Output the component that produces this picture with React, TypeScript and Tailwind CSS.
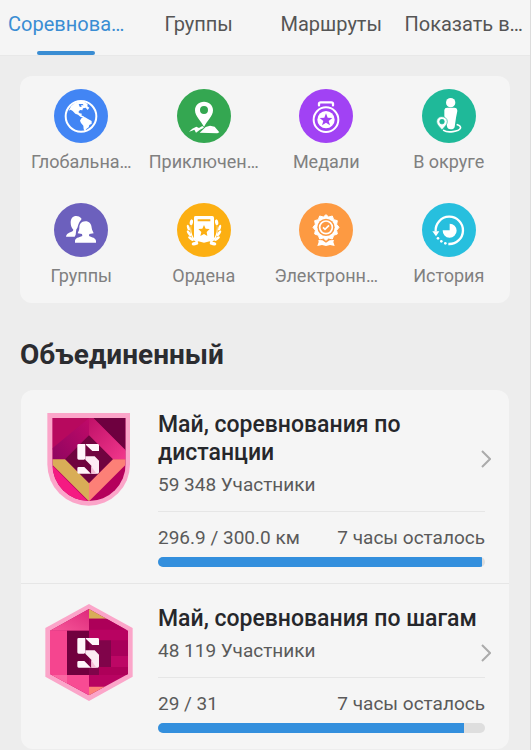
import type { ReactNode } from "react";

const tabs = ["Соревнова…", "Группы", "Маршруты", "Показать в…"];

function Globe() {
  return (
    <svg viewBox="102 39 162 162" className="size-full" aria-hidden="true">
      <circle cx="183" cy="121" r="46" fill="none" stroke="white" strokeWidth="6" />
      <path
        fill="white"
        d="M146 104 153 91 164 81 178 76 192 77 203 84 202 91 208 95 203 102 197 95 189 97 187 103 180 102 175 108 179 112 186 113 184 118 193 122 190 125 181 122 174 116 166 113 158 105 152 101ZM184 127 194 123 204 129 215 135 215 143 208 147 206 154 198 160 196 167 191 160 190 149 183 141 180 134ZM176 84 179 92 185 93 183 88 191 88 188 84Z"
      />
    </svg>
  );
}

function Adventure() {
  return (
    <svg viewBox="471 39 162 162" className="size-full" aria-hidden="true">
      <path
        fill="white"
        fillRule="evenodd"
        d="M552 77C536 77 525 88 525 103C525 121 543 134 552 153C561 134 579 121 579 103C579 88 568 77 552 77ZM552 90A12 12 0 1 1 552 114A12 12 0 1 1 552 90Z"
      />
      <path fill="white" d="M507 167 517 158 529 152 537 156 547 150 552 155 540 161 528 170 523 161 514 165ZM539 170 557 153 570 149 584 152 598 169 592 172Z" />
    </svg>
  );
}

function Medal() {
  return (
    <svg viewBox="88 39 162 162" className="size-full" aria-hidden="true">
      <path d="M148 88V83Q148 79 153 79H185Q190 79 190 83V88" fill="none" stroke="white" strokeWidth="7" strokeLinecap="round" />
      <circle cx="169" cy="131" r="37" fill="none" stroke="white" strokeWidth="6" />
      <circle cx="169" cy="131" r="26" fill="white" />
      <path fill="#a142f4" d="m169 112 5 13 14 1-11 9 4 13-12-8-12 8 4-13-11-9 14-1Z" />
    </svg>
  );
}

function Nearby() {
  return (
    <svg viewBox="456 39 162 162" className="size-full" aria-hidden="true">
      <path d="M562 146C577 151 576 163 549 167C536 169 525 166 521 163" fill="none" stroke="white" strokeWidth="5" strokeLinecap="round" />
      <circle cx="542" cy="80" r="14" fill="white" />
      <path fill="white" d="M531 95H553Q562 95 562 105L558 125 554 153Q552 160 542 160Q532 160 531 151L523 121V102Q524 95 531 95Z" />
      <path
        fill="white"
        stroke="#1fb999"
        strokeWidth="2"
        fillRule="evenodd"
        d="M515 122C506 122 500 128 500 137C500 147 510 153 516 162C522 153 532 147 532 137C532 128 525 122 515 122ZM516 130A7 7 0 1 1 516 144A7 7 0 1 1 516 130Z"
      />
    </svg>
  );
}

function People() {
  return (
    <svg viewBox="102 39 162 162" className="size-full" aria-hidden="true">
      <path fill="white" d="M169 78C158 78 152 86 152 98C152 108 156 114 160 119C159 128 139 125 138 140H164L167 134 169 118C174 115 173 104 180 94C184 89 186 88 183 84Q178 78 169 78Z" />
      <path fill="white" d="M196 94C183 94 178 103 178 114C178 122 174 125 173 130L186 132 187 138C176 142 165 144 165 153V158H228V153C228 144 216 142 207 138L208 132 221 130C219 124 216 121 215 113C214 102 208 94 196 94Z" />
    </svg>
  );
}

function Order() {
  return (
    <svg viewBox="471 39 162 162" className="size-full" aria-hidden="true">
      <path fill="white" d="M522 82Q522 78 527 78H577Q582 78 582 83V145L575 152 552 158 529 152 522 145Z" />
      <path fill="#fcaf12" d="M533 88H571V94H533ZM552 105 557 116 569 117 560 126 562 138 552 132 541 138 544 126 535 117 547 116Z" />
      {["", "translate(1104 0) scale(-1 1)"].map((mirror) => (
        <g key={mirror} transform={mirror || undefined} fill="white">
          <ellipse cx="514" cy="97" rx="5" ry="9" transform="rotate(12 514 97)" />
          <ellipse cx="505" cy="113" rx="4" ry="9" transform="rotate(-17 505 113)" />
          <ellipse cx="507" cy="130" rx="4" ry="10" transform="rotate(-33 507 130)" />
          <ellipse cx="513" cy="146" rx="4" ry="10" transform="rotate(-55 513 146)" />
          <ellipse cx="525" cy="161" rx="10" ry="5" transform="rotate(-10 525 161)" />
          <path d="M514 103Q511 128 521 143L535 155 531 158Q504 142 514 103Z" />
        </g>
      ))}
    </svg>
  );
}

function Certificate() {
  return (
    <svg viewBox="88 39 162 162" className="size-full" aria-hidden="true">
      <path
        fill="white"
        stroke="white"
        strokeWidth="3"
        strokeLinejoin="round"
        d="m169 74 8 7 11-3 4 11 11 3-2 11 7 9-7 9 2 11-11 4-4 11-11-3-8 7-8-7-11 3-4-11-11-4 2-11-7-9 7-9-2-11 11-3 4-11 11 3Z"
      />
      <circle cx="169" cy="112" r="26" fill="#fd9a42" />
      <circle cx="169" cy="112" r="19" fill="none" stroke="white" strokeWidth="5" />
      <path d="m160 112 6 6 12-12" fill="none" stroke="white" strokeWidth="5" />
      <path fill="white" d="M146 150 158 151 169 158 180 151 193 150 191 156 195 168 181 165 169 168 157 165 143 168 147 156Z" />
    </svg>
  );
}

function History() {
  return (
    <svg viewBox="456 39 162 162" className="size-full" aria-hidden="true">
      <path d="M497 124A41 41 0 1 1 535 162" fill="none" stroke="white" strokeWidth="7" />
      <path fill="white" d="M487 124H508L498 139Z" />
      <path fill="white" d="M539 101V121H518A21 21 0 1 0 539 101Z" />
      <circle cx="504" cy="145" r="4" fill="white" />
      <circle cx="514" cy="154" r="4" fill="white" />
      <circle cx="526" cy="160" r="4" fill="white" />
    </svg>
  );
}

const shortcuts: { label: string; color: string; icon: ReactNode }[] = [
  { label: "Глобальна…", color: "bg-[#4285f4]", icon: <Globe /> },
  { label: "Приключен…", color: "bg-[#34a751]", icon: <Adventure /> },
  { label: "Медали", color: "bg-[#a142f4]", icon: <Medal /> },
  { label: "В округе", color: "bg-[#1fb999]", icon: <Nearby /> },
  { label: "Группы", color: "bg-[#6c60bd]", icon: <People /> },
  { label: "Ордена", color: "bg-[#fcaf12]", icon: <Order /> },
  { label: "Электронн…", color: "bg-[#fd9a42]", icon: <Certificate /> },
  { label: "История", color: "bg-[#27bfde]", icon: <History /> },
];

function FiveMark() {
  return (
    <g>
      <path fill="#fff5fa" d="M146 132H166V176L162 179H146Q142 179 142 175V136Q142 132 146 132ZM168 132H203Q207 132 207 136V153H187L168 135ZM146 201H163L183 221H146Q142 221 142 217V205Q142 201 146 201Z" />
      <path fill="#fdeaf3" d="M166 169H194L207 182V217Q207 221 203 221H184V197L166 179Z" />
      <path fill="#f7c0d8" d="M184 199 199 221H184Z" />
    </g>
  );
}

function ShieldBadge() {
  return (
    <svg viewBox="45 30 267 294" className="h-[98px] w-[89px] shrink-0" aria-hidden="true">
      <defs>
        <clipPath id="shield">
          <path d="M67 54H287V193A110 110 0 0 1 67 193Z" />
        </clipPath>
        <linearGradient id="shieldLeft" x1="0" y1="1" x2="1" y2="0">
          <stop offset="0" stopColor="#8f0560" />
          <stop offset="1" stopColor="#c00a68" />
        </linearGradient>
        <linearGradient id="shieldRight" x1="0" y1="0" x2="1" y2="1">
          <stop offset="0" stopColor="#bf1068" />
          <stop offset="1" stopColor="#f2388c" />
        </linearGradient>
      </defs>
      <path fill="#fba5c9" d="M52 39H300V193A124 124 0 0 1 52 193Z" />
      <g clipPath="url(#shield)">
        <path fill="#b5005c" d="M60 50H300V320H60Z" />
        <path fill="#b7095e" d="M67 54H177L67 150Z" />
        <path fill="#6e003f" d="M190 54H287V152Z" />
        <path fill="url(#shieldLeft)" d="M67 145 177 54V108L105 178H67Z" />
        <path fill="url(#shieldRight)" d="M177 54H190L287 151V178H247L177 108Z" />
        <path fill="#70043f" d="M177 106 249 178 177 250 105 178Z" />
        <path fill="#f51a82" d="M60 190 174 304H60Z" />
        <path fill="#d9ad57" d="M67 178H105L177 250V304L67 194Z" />
        <path fill="#fc8077" d="M249 178H287V194L177 304V250Z" />
      </g>
      <FiveMark />
    </svg>
  );
}

function HexagonBadge() {
  return (
    <svg viewBox="45 30 267 294" className="h-[98px] w-[89px] shrink-0" aria-hidden="true">
      <defs>
        <clipPath id="hexagon">
          <path d="M177 45 294 110V240L177 304 60 240V110Z" />
        </clipPath>
        <linearGradient id="hexTop" x1="0" y1="1" x2="1" y2="0">
          <stop offset="0" stopColor="#f85b9b" />
          <stop offset="1" stopColor="#dc2478" />
        </linearGradient>
      </defs>
      <path fill="#fba5c9" d="M177 30 308 102V248L177 321 46 248V102Z" />
      <g clipPath="url(#hexagon)">
        <path fill="#b80361" d="M50 30H310V320H50Z" />
        <path fill="url(#hexTop)" d="M50 30H177V110H50Z" />
        <path fill="#f5458f" d="M50 110H111V243H50Z" />
        <path fill="#f84b93" d="M50 243H177V320H50Z" />
        <path fill="#fb67a2" d="M60 243H111V278Z" />
        <path fill="#d9ad57" d="M177 30V74H233Z" />
        <path fill="#ad0059" d="M177 74H300V107H177Z" />
        <path fill="#b80361" d="M177 107H243V139H177Z" />
        <path fill="#a8005a" d="M243 139H300V186H243Z" />
        <path fill="#bd0765" d="M243 186H300V219H243Z" />
        <path fill="#ae0059" d="M207 219H300V243H207Z" />
        <path fill="#71003e" d="M111 110H177V243H111Z" />
        <path fill="#80044a" d="M177 139H243V219H207V243H177Z" />
        <path fill="#fc8077" d="M177 278H228L177 310Z" />
      </g>
      <FiveMark />
    </svg>
  );
}

const competitions = [
  {
    title: "Май, соревнования по дистанции",
    members: "59 348 Участники",
    progress: "296.9 / 300.0 км",
    left: "7 часы осталось",
    value: 296.9,
    max: 300,
    badge: <ShieldBadge />,
  },
  {
    title: "Май, соревнования по шагам",
    members: "48 119 Участники",
    progress: "29 / 31",
    left: "7 часы осталось",
    value: 29,
    max: 31,
    badge: <HexagonBadge />,
  },
];

export default function App() {
  return (
    <div className="min-h-screen border-r border-[#dcdcdc] bg-[#ededed] font-['Roboto','Noto_Sans',sans-serif]">
      <nav className="grid h-14 grid-cols-4 border-b border-[#e8e8e8] bg-[#f5f5f5]">
        {tabs.map((tab, i) => (
          <button
            key={tab}
            type="button"
            aria-current={i === 0 ? "page" : undefined}
            className={`flex flex-col items-center justify-between pt-3 text-[20px] leading-6 whitespace-nowrap ${
              i === 0 ? "text-[#3a8dd3]" : "text-[#555555]"
            }`}
          >
            {tab}
            {i === 0 && <span className="h-1 w-[58px] rounded-full bg-[#3a8dd3]" />}
          </button>
        ))}
      </nav>

      <main className="px-5 pt-5">
        <section className="grid grid-cols-4 gap-y-[29px] rounded-xl bg-[#f5f5f5] pt-[13px] pb-[15px]">
          {shortcuts.map((item) => (
            <button key={item.label} type="button" className="flex flex-col items-center gap-[7px] text-[18px] leading-6 whitespace-nowrap text-[#808080]">
              <span className={`size-[54px] rounded-full ${item.color}`}>{item.icon}</span>
              {item.label}
            </button>
          ))}
        </section>

        <h1 className="mt-[34px] text-[28px] leading-9 font-bold text-[#2b2c30]">Объединенный</h1>

        <section className="mx-px mt-[17px] divide-y divide-[#e6e6e6] rounded-xl bg-[#f5f5f5]">
          {competitions.map((item) => (
            <a key={item.title} href="#" className="flex items-start pt-5 pr-[18px] pb-4 pl-6">
              {item.badge}
              <div className="ml-6 min-w-0 flex-1 pt-px text-[19px] leading-6 text-[#5a5a5a]">
                <h2 className="text-[23px] leading-7 font-medium text-[#26272b]">{item.title}</h2>
                <p className="mt-[6px]">{item.members}</p>
                <div className="mt-[14px] flex justify-between border-t border-[#e6e6e6] pt-[14px] whitespace-nowrap">
                  <span>{item.progress}</span>
                  <span>{item.left}</span>
                </div>
                <div
                  role="progressbar"
                  aria-label={item.title}
                  aria-valuenow={item.value}
                  aria-valuemax={item.max}
                  className="mt-[7px] h-[10px] overflow-hidden rounded-full bg-[#dedede]"
                >
                  <div className="h-full bg-[#338fdd]" style={{ width: `${(item.value / item.max) * 100}%` }} />
                </div>
              </div>
              <svg viewBox="0 0 10 18" className="mt-10 -ml-1 h-[18px] w-[10px] shrink-0" fill="none" stroke="#ababab" strokeWidth="2" aria-hidden="true">
                <path d="m1 1 8 8-8 8" />
              </svg>
            </a>
          ))}
        </section>
      </main>
    </div>
  );
}
